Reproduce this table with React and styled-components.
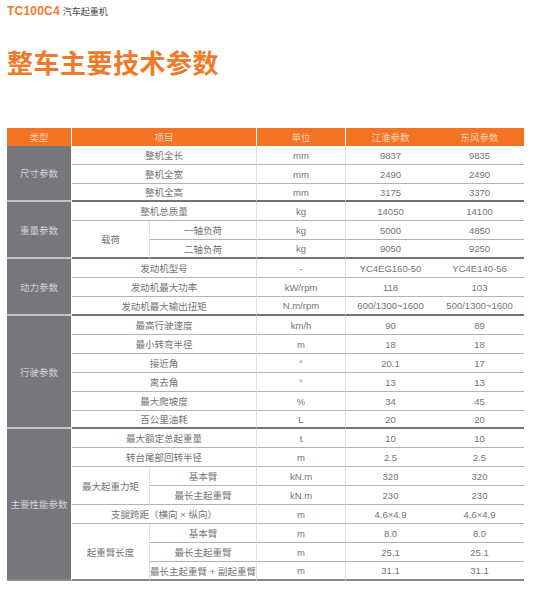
import React from 'react';
import styled, { createGlobalStyle } from 'styled-components';

const GlobalStyle = createGlobalStyle`
  html, body {
    margin: 0;
    padding: 0;
    background: #ffffff;
  }
  body {
    font-family: "Liberation Sans", "Noto Sans CJK SC", sans-serif;
  }
`;

const Page = styled.div`
  width: 534px;
  height: 604px;
  padding: 4px 7px 0 7px;
  box-sizing: border-box;
  overflow: hidden;
`;

const TopBar = styled.div`
  display: flex;
  align-items: baseline;
  gap: 3px;
  height: 14px;
`;

const Model = styled.span`
  font-family: "Liberation Sans Narrow", "Liberation Sans", sans-serif;
  font-weight: 700;
  font-size: 12px;
  color: #f07a2a;
  letter-spacing: 0.2px;
`;

const ModelName = styled.span`
  font-family: "Noto Sans CJK SC", sans-serif;
  font-size: 9px;
  color: #444;
`;

const Title = styled.h1`
  margin: 29px 0 0 0;
  font-family: "Noto Sans CJK SC", sans-serif;
  font-weight: 700;
  font-size: 26px;
  line-height: 30px;
  color: #f07a2a;
  letter-spacing: 0.5px;
`;

const Table = styled.table`
  margin-top: 51px;
  width: 517px;
  border-collapse: separate;
  border-spacing: 0;
  table-layout: fixed;
  font-size: 9.5px;
  color: #747474;
`;

const HeadCell = styled.th`
  height: 18px;
  padding: 0;
  background: #f37224;
  color: #fcd3b6;
  font-weight: 400;
  font-size: 9.5px;
  border-right: ${({ $noDivider }) => ($noDivider ? 'none' : '1px solid #ffffff')};
`;

const TypeCell = styled.td`
  background: #77777b;
  color: #d2d2d4;
  text-align: center;
  padding: 0;
  border-right: 1px solid #ffffff;
  border-bottom: ${({ $last }) => ($last ? '2px solid #8a8a8a' : '2px solid #c4c4c6')};
`;

const Cell = styled.td`
  height: ${({ $edge, $tight }) => ($edge ? ($tight ? '16px' : '17px') : '18px')};
  padding: 0;
  text-align: center;
  white-space: nowrap;
  background: #ffffff;
  border-bottom: ${({ $edge, $final }) =>
    $final ? '2px solid #8a8a8a' : $edge ? '2px solid #737373' : '1px solid #b4b4b4'};
  border-right: ${({ $divider }) => ($divider ? '1px solid #dedede' : 'none')};
`;

const ParentCell = styled(Cell)`
  border-right: 1px solid #e2e2e2;
`;

const groups = [
  {
    name: '尺寸参数',
    tight: true,
    rows: [
      { item: '整机全长', unit: 'mm', a: '9837', b: '9835' },
      { item: '整机全宽', unit: 'mm', a: '2490', b: '2490' },
      { item: '整机全高', unit: 'mm', a: '3175', b: '3370' },
    ],
  },
  {
    name: '重量参数',
    rows: [
      { item: '整机总质量', unit: 'kg', a: '14050', b: '14100' },
      { parent: '载荷', span: 2, sub: '一轴负荷', unit: 'kg', a: '5000', b: '4850' },
      { sub: '二轴负荷', unit: 'kg', a: '9050', b: '9250' },
    ],
  },
  {
    name: '动力参数',
    rows: [
      { item: '发动机型号', unit: '-', a: 'YC4EG160-50', b: 'YC4E140-56' },
      { item: '发动机最大功率', unit: 'kW/rpm', a: '118', b: '103' },
      { item: '发动机最大输出扭矩', unit: 'N.m/rpm', a: '600/1300~1600', b: '500/1300~1600' },
    ],
  },
  {
    name: '行驶参数',
    tight: true,
    rows: [
      { item: '最高行驶速度', unit: 'km/h', a: '90', b: '89' },
      { item: '最小转弯半径', unit: 'm', a: '18', b: '18' },
      { item: '接近角', unit: '°', a: '20.1', b: '17' },
      { item: '离去角', unit: '°', a: '13', b: '13' },
      { item: '最大爬坡度', unit: '%', a: '34', b: '45' },
      { item: '百公里油耗', unit: 'L', a: '20', b: '20' },
    ],
  },
  {
    name: '主要性能参数',
    rows: [
      { item: '最大额定总起重量', unit: 't', a: '10', b: '10' },
      { item: '转台尾部回转半径', unit: 'm', a: '2.5', b: '2.5' },
      { parent: '最大起重力矩', span: 2, sub: '基本臂', unit: 'kN.m', a: '320', b: '320' },
      { sub: '最长主起重臂', unit: 'kN.m', a: '230', b: '230' },
      { item: '支腿跨距（横向 × 纵向）', unit: 'm', a: '4.6×4.9', b: '4.6×4.9' },
      { parent: '起重臂长度', span: 3, sub: '基本臂', unit: 'm', a: '8.0', b: '8.0' },
      { sub: '最长主起重臂', unit: 'm', a: '25.1', b: '25.1' },
      { sub: '最长主起重臂 + 副起重臂', unit: 'm', a: '31.1', b: '31.1' },
    ],
  },
];

const App = () => {
  return (
    <Page>
      <GlobalStyle />
      <TopBar>
        <Model>TC100C4</Model>
        <ModelName>汽车起重机</ModelName>
      </TopBar>
      <Title>整车主要技术参数</Title>
      <Table>
        <colgroup>
          <col style={{ width: 65 }} />
          <col style={{ width: 78 }} />
          <col style={{ width: 107 }} />
          <col style={{ width: 89 }} />
          <col style={{ width: 89 }} />
          <col style={{ width: 89 }} />
        </colgroup>
        <thead>
          <tr>
            <HeadCell>类型</HeadCell>
            <HeadCell colSpan={2}>项目</HeadCell>
            <HeadCell>单位</HeadCell>
            <HeadCell $noDivider>江淮参数</HeadCell>
            <HeadCell $noDivider>东风参数</HeadCell>
          </tr>
        </thead>
        <tbody>
          {groups.map((g, gi) => {
            const isLastGroup = gi === groups.length - 1;
            return g.rows.map((r, ri) => {
              const edge = ri === g.rows.length - 1;
              const final = edge && isLastGroup;
              const parentEdge = r.parent && ri + r.span === g.rows.length;
              const common = { $edge: edge, $final: final, $tight: g.tight };
              return (
                <tr key={`${gi}-${ri}`}>
                  {ri === 0 && (
                    <TypeCell rowSpan={g.rows.length} $last={isLastGroup}>
                      {g.name}
                    </TypeCell>
                  )}
                  {r.item && (
                    <Cell colSpan={2} {...common} $divider>
                      {r.item}
                    </Cell>
                  )}
                  {r.parent && (
                    <ParentCell rowSpan={r.span} $edge={parentEdge} $final={parentEdge && isLastGroup}>
                      {r.parent}
                    </ParentCell>
                  )}
                  {r.sub && (
                    <Cell {...common} $divider>
                      {r.sub}
                    </Cell>
                  )}
                  <Cell {...common} $divider>{r.unit}</Cell>
                  <Cell {...common}>{r.a}</Cell>
                  <Cell {...common}>{r.b}</Cell>
                </tr>
              );
            });
          })}
        </tbody>
      </Table>
    </Page>
  );
};

export default App;
